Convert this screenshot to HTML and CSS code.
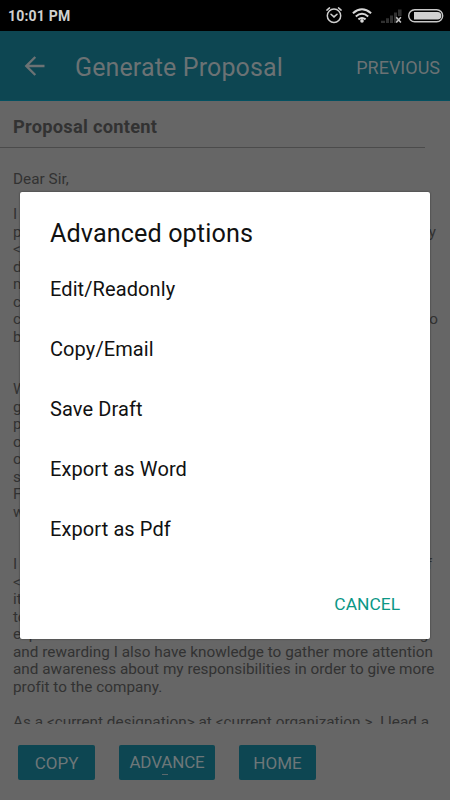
FILE: index.html
```html
<!DOCTYPE html>
<html lang="en">
<head>
<meta charset="utf-8">
<title>Generate Proposal</title>
<link rel="stylesheet" href="styles.css">
</head>
<body>
<div class="screen">
  <div class="status">
    <span class="clock">10:01 PM</span>
    <svg class="status-icons" width="122" height="31" viewBox="0 0 122 31" fill="none">
      <g stroke="#d0d0d0" stroke-width="1.5" stroke-linecap="round">
        <circle cx="8" cy="15.7" r="6.7"/>
        <path d="M5 14.2l3 2.7 3-2.7M.9 10.1l2.6-2.2M15.1 10.1l-2.6-2.2"/>
      </g>
      <g stroke="#d8d8d8" stroke-width="2">
        <path d="M26.9 13.2Q36 5.4 45.1 13.2M29.8 16.4Q36 11.2 42.2 16.4M32.4 19.4Q36 16.6 39.6 19.4"/>
      </g>
      <circle cx="36" cy="20.9" r="1.8" fill="#d8d8d8"/>
      <path d="M55 20.7h4V23h-4zM60 18.2h3V23h-3zM64 15.6h3V23h-3zM68 12.6h3V23h-3zM72 9.6h3.6V16H72z" fill="#303030"/>
      <path d="M70.3 17.2l4.6 5.3M74.9 17.2l-4.6 5.3" stroke="#c8c8c8" stroke-width="1.5"/>
      <rect x="82.7" y="9.7" width="34" height="12" rx="6" stroke="#c8c8c8" stroke-width="1.4"/>
      <path d="M88 12h23.5a3.7 3.7 0 0 1 0 7.6H88z" fill="#d0d0d0"/>
    </svg>
  </div>
  <header class="bar">
    <svg class="back" width="22" height="22" viewBox="0 0 22 22" fill="none" stroke="#6b7274" stroke-width="2.4"><path d="M20.5 11H2.5M11.3 2L2.3 11l9 9"/></svg>
    <h1 class="title">Generate Proposal</h1>
    <span class="previous">PREVIOUS</span>
  </header>
  <h2 class="heading">Proposal content</h2>
  <div class="letter">
    <p>Dear Sir,</p>
    <p></p>
    <p>I</p>
    <p class="split e1"><span>p</span><span>y</span></p>
    <p>&lt;</p>
    <p>d</p>
    <p>m</p>
    <p>c</p>
    <p class="split e2"><span>c</span><span>o</span></p>
    <p>b</p>
    <p></p>
    <p></p>
    <p>W</p>
    <p>g</p>
    <p>p</p>
    <p>o</p>
    <p>o</p>
    <p>s</p>
    <p>F</p>
    <p>w</p>
    <p></p>
    <p></p>
    <p class="split e3"><span>I</span><span>f</span></p>
    <p>&lt;</p>
    <p>it</p>
    <p>to</p>
    <p>experience&nbsp; and I am sure that I will find this work fascinating</p>
    <p>and rewarding I also have knowledge to gather more attention</p>
    <p>and awareness about my responsibilities in order to give more</p>
    <p>profit to the company.</p>
    <p></p>
    <p>As a &lt;current designation&gt; at &lt;current organization &gt;&nbsp; I lead a</p>
  </div>
  <footer class="actions">
    <span class="btn">COPY</span>
    <span class="btn wide">ADVANCE<i class="dash"></i></span>
    <span class="btn">HOME</span>
  </footer>
  <section class="dialog">
    <h2 class="dialog-title">Advanced options</h2>
    <ul class="options">
      <li>Edit/Readonly</li>
      <li>Copy/Email</li>
      <li>Save Draft</li>
      <li>Export as Word</li>
      <li>Export as Pdf</li>
    </ul>
    <div class="cancel"><span>CANCEL</span></div>
  </section>
</div>
</body>
</html>
```
FILE: styles.css
```css
* { box-sizing: border-box; margin: 0; padding: 0; }
body { font-family: Roboto, sans-serif; background: #666; }
.screen { position: relative; width: 450px; height: 800px; overflow: hidden; display: flex; flex-direction: column; background: #666; }
.status { height: 31px; flex: none; background: #000; display: flex; justify-content: space-between; align-items: center; padding-left: 8px; padding-right: 2px; }
.clock { color: #d0d0d0; font-size: 14px; font-weight: 700; line-height: 31px; letter-spacing: .2px; padding-top: 2px; }
.bar { height: 70px; flex: none; display: flex; align-items: center; background: #0d4652; color: #6b7274; padding: 2px 10px 0 24px; box-shadow: inset 0 -1px #045060; }
.back { flex: none; margin-bottom: 2px; }
.title { margin-left: 29px; font-size: 25px; font-weight: 400; letter-spacing: .13px; white-space: nowrap; }
.previous { margin-left: auto; font-size: 18px; }
.heading { height: 47px; flex: none; width: 425px; padding-left: 13px; padding-top: 1px; line-height: 50px; font-size: 18.3px; color: #323232; border-bottom: 1px solid #4b4b4b; letter-spacing: .25px; }
.letter { height: 576px; flex: none; overflow: hidden; padding: 23px 0 0 13px; font-size: 15.3px; line-height: 17px; color: #323232; letter-spacing: .02px; white-space: nowrap; }
.letter p { height: 17.5px; }
.split { display: flex; justify-content: space-between; }
.e1 { padding-right: 14px; }
.e2 { padding-right: 12px; }
.e3 { padding-right: 18px; }
.actions { display: flex; gap: 24px; padding: 21px 0 0 18px; }
.btn { position: relative; width: 77px; height: 35px; background: #0d4652; border-radius: 2px; color: #6d7779; font-size: 17px; line-height: 37px; text-align: center; }
.wide { width: 96px; line-height: 34px; letter-spacing: -.15px; }
.dash { position: absolute; left: 43px; top: 29px; width: 6px; height: 1px; background: #5c696c; }
.dialog { position: absolute; left: 20px; top: 192px; width: 410px; height: 447px; background: #fff; border-radius: 2px; box-shadow: 0 0 2px rgba(0,0,0,.55); padding: 17px 30px 0; color: #111; display: flex; flex-direction: column; }
.dialog-title { font-size: 25.2px; font-weight: 400; line-height: 50px; letter-spacing: .1px; }
.options { list-style: none; font-size: 20px; font-weight: 400; letter-spacing: .1px; margin-top: -1px; }
.options li { height: 60px; line-height: 62px; }
.cancel { margin-top: 26px; text-align: right; color: #0b9786; font-size: 17.4px; line-height: 40px; }
```
